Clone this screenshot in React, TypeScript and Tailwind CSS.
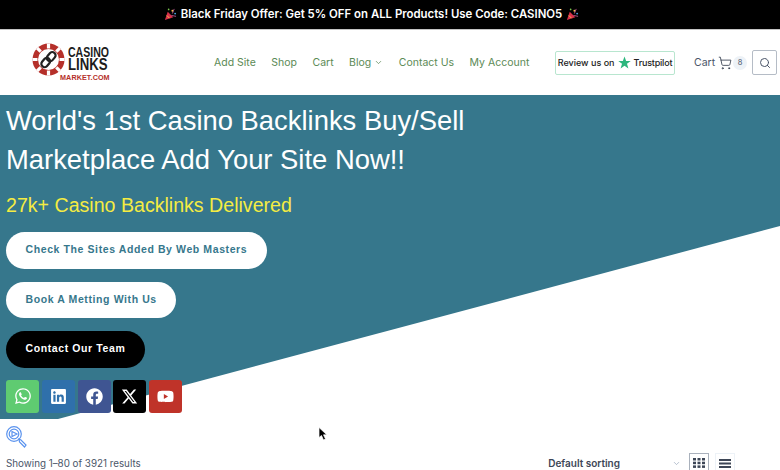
import { Search, ShoppingCart, ChevronDown } from "lucide-react";
import { FaWhatsapp, FaFacebook, FaLinkedin, FaYoutube } from "react-icons/fa";
import { FaXTwitter } from "react-icons/fa6";

function Popper() {
  return (
    <svg width="13" height="13" viewBox="0 0 14 14" className="shrink-0">
      <path d="M1 13 L4 4 L10 10 Z" fill="#d8304a" />
      <path d="M3 8 L6 11" stroke="#f6c445" strokeWidth="1" />
      <circle cx="9" cy="3" r="1" fill="#f6c445" />
      <circle cx="12" cy="6" r="1" fill="#4aa3df" />
      <circle cx="5" cy="1.5" r="0.9" fill="#7ac74f" />
      <path d="M11 1 L9 6 M13 9 L8 8" stroke="#e06bb0" strokeWidth="0.8" />
    </svg>
  );
}

function Logo() {
  return (
    <div className="relative h-[40px] w-[80px]">
      <svg width="33" height="33" viewBox="0 0 33 33" className="absolute left-0 top-0">
        <circle cx="16.5" cy="16.5" r="16" fill="#b5302a" />
        <circle cx="16.5" cy="16.5" r="10.5" fill="#fff" />
        <g stroke="#fff" strokeWidth="3.2">
          <path d="M16.5 0.5v5M16.5 27.5v5M0.5 16.5h5M27.5 16.5h5M5.2 5.2l3.5 3.5M24.3 24.3l3.5 3.5M27.8 5.2l-3.5 3.5M8.7 24.3l-3.5 3.5" />
        </g>
        <g fill="none" stroke="#222" strokeWidth="2.2">
          <rect x="16" y="8.5" width="6.5" height="10" rx="3.2" transform="rotate(40 19 13.5)" />
          <rect x="10.5" y="14.5" width="6.5" height="10" rx="3.2" transform="rotate(40 13.7 19.5)" />
        </g>
      </svg>
      <div className="absolute left-[36px] top-[2px] flex flex-col items-start whitespace-nowrap font-['Liberation_Sans',sans-serif] font-bold text-[#1c1c1c]">
        <span className="origin-left scale-x-[0.68] text-[15.5px] leading-[13px]">CASINO</span>
        <span className="origin-left scale-x-[0.8] text-[16.5px] leading-[13px]">LINKS</span>
      </div>
      <span className="absolute left-[28px] top-[30px] whitespace-nowrap font-['Liberation_Sans',sans-serif] text-[7.2px] font-bold leading-[9px] tracking-[0.1px] text-[#b5302a]">MARKET.COM</span>
    </div>
  );
}

const socials = [
  { bg: "bg-[#5fcb71]", icon: <FaWhatsapp size={18} /> },
  { bg: "bg-[#2f70ab]", icon: <FaLinkedin size={17} /> },
  { bg: "bg-[#3f5592]", icon: <FaFacebook size={17} /> },
  { bg: "bg-black", icon: <FaXTwitter size={17} /> },
  { bg: "bg-[#bf3329]", icon: <FaYoutube size={17} /> },
];

export default function App() {
  return (
    <div className="relative flex h-[470px] w-[780px] flex-col overflow-hidden bg-white font-['Inter',sans-serif]">
      <div className="flex h-[29px] shrink-0 items-center justify-center gap-1 whitespace-nowrap bg-black pr-[37px] text-[11.4px] font-semibold text-white">
        <Popper />
        <span>Black Friday Offer: Get 5% OFF on ALL Products! Use Code: CASINO5</span>
        <Popper />
      </div>
      <header className="flex h-[66px] shrink-0 items-center whitespace-nowrap border-t border-[#c4c4c4] pl-[32px]">
        <div className="w-[182px] shrink-0"><Logo /></div>
        <nav className="flex w-[314px] shrink-0 items-center gap-[15.5px] text-[10.5px] text-[#5c8a56]">
          <span>Add Site</span>
          <span>Shop</span>
          <span>Cart</span>
          <span className="flex items-center gap-[3px]">Blog <ChevronDown size={9} /></span>
          <span>Contact Us</span>
          <span>My Account</span>
        </nav>
        <div className="ml-[27px] flex h-[24px] w-[120px] shrink-0 items-center justify-center gap-[3px] rounded-[2px] border border-[#b8e6cf] text-[9px] font-medium text-[#222]">
          <span>Review us on</span>
          <svg width="13" height="13" viewBox="0 0 24 24" fill="#2cb67d"><polygon points="12,1 15,9.2 23.5,9.2 16.6,14.4 19.2,23 12,17.8 4.8,23 7.4,14.4 0.5,9.2 9,9.2" /></svg>
          <span className="tracking-[-0.2px]">Trustpilot</span>
        </div>
        <div className="ml-[19px] flex w-[58px] shrink-0 items-center text-[10.5px] text-[#4a5568]">
          <span>Cart</span>
          <ShoppingCart size={14} strokeWidth={1.4} className="ml-[3px] text-[#2d3748]" />
          <span className="ml-[1px] flex h-[14px] w-[14px] items-center justify-center rounded-full bg-[#edf2f7] text-[7.5px]">8</span>
        </div>
        <div className="flex h-[25px] w-[25px] shrink-0 items-center justify-center rounded-[2px] border border-[#b5bcc6] text-[#4a5568]">
          <Search size={12} />
        </div>
      </header>

      <section className="relative flex h-[324px] shrink-0 flex-col items-start bg-[#36778c] pl-[6px] pt-[6px] font-['Liberation_Sans',sans-serif]">
        <svg className="absolute inset-0 h-full w-full" viewBox="0 0 780 324" preserveAspectRatio="none">
          <polygon points="780,131 780,324 58,324" fill="#fff" />
        </svg>
        <h1 className="relative w-[480px] text-[27.4px] leading-[39px] font-normal text-white">World's 1st Casino Backlinks Buy/Sell Marketplace Add Your Site Now!!</h1>
        <p className="relative mt-[13px] text-[19.6px] leading-[26px] text-[#f5ec42]">27k+ Casino Backlinks Delivered</p>
        <div className="relative mt-[14px] flex flex-col items-start gap-[13px] text-[10.5px] font-bold tracking-[0.6px]">
          <a className="flex h-[36.5px] items-center rounded-full bg-white px-[19.5px] text-[#36778c]">Check The Sites Added By Web Masters</a>
          <a className="flex h-[36.5px] items-center rounded-full bg-white px-[19.5px] text-[#36778c]">Book A Metting With Us</a>
          <a className="flex h-[36.5px] items-center rounded-full bg-black px-[19.5px] text-white">Contact Our Team</a>
        </div>
        <div className="relative mt-[12px] flex gap-[2.75px]">
          {socials.map((s, i) => (
            <span key={i} className={`flex h-[33px] w-[33px] items-center justify-center rounded-[3px] text-white ${s.bg}`}>{s.icon}</span>
          ))}
        </div>
      </section>

      <div className="pl-[6px] pt-[7px]">
        <svg width="22" height="22" viewBox="0 0 22 22" fill="none" stroke="#5b93ee" strokeWidth="1.2">
          <circle cx="8" cy="8" r="7.3" />
          <circle cx="8" cy="8" r="4.8" />
          <path d="M6 5.5 L11 8 L6 10.5 Z" />
          <path d="M13 13 L15 14 L20 19 L18.5 21 L13.5 16 Z" />
        </svg>
      </div>

      <div className="flex items-center whitespace-nowrap pl-[6px] pr-[45px] pt-[5px] text-[9.8px] text-[#4a5568]">
        <span className="relative top-[1px]">Showing 1–80 of 3921 results</span>
        <span className="ml-auto text-[10px] font-semibold text-[#3d4656]">Default sorting</span>
        <ChevronDown size={9} className="ml-[52px] text-[#a0aec0]" />
        <span className="ml-[8px] flex h-[20px] w-[20px] items-center justify-center border border-[#a9b1bc]">
          <svg width="12" height="10" viewBox="0 0 12 10" fill="#3d4656">
            <rect x="0" y="0" width="3" height="2.5" /><rect x="4.5" y="0" width="3" height="2.5" /><rect x="9" y="0" width="3" height="2.5" />
            <rect x="0" y="3.7" width="3" height="2.5" /><rect x="4.5" y="3.7" width="3" height="2.5" /><rect x="9" y="3.7" width="3" height="2.5" />
            <rect x="0" y="7.4" width="3" height="2.5" /><rect x="4.5" y="7.4" width="3" height="2.5" /><rect x="9" y="7.4" width="3" height="2.5" />
          </svg>
        </span>
        <span className="ml-[6px] flex h-[20px] w-[20px] items-center justify-center border border-[#edf2f7]">
          <svg width="12" height="9" viewBox="0 0 12 9" fill="#3d4656">
            <rect width="12" height="2" /><rect y="3.5" width="12" height="2" /><rect y="7" width="12" height="2" />
          </svg>
        </span>
      </div>

      <svg className="absolute left-[318px] top-[427px]" width="10" height="14" viewBox="0 0 10 14">
        <path d="M1 0.5 L1 10.5 L3.5 8.5 L5.5 13 L7.5 12 L5.5 7.8 L8.8 7.8 Z" fill="#000" stroke="#fff" strokeWidth="0.7" />
      </svg>
    </div>
  );
}
